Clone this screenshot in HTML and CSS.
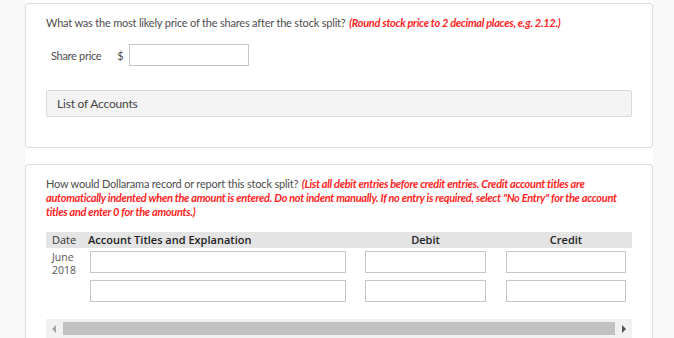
FILE: index.html
```html
<!DOCTYPE html>
<html lang="en">

<head>
    <meta charset="UTF-8">
    <meta name="viewport" content="width=device-width, initial-scale=1.0">
    <title>Stock Split</title>
    <link rel="stylesheet" href="styles.css">
</head>

<body>
    <div class="page">
        <div class="card card-first">
            <p class="question">What was the most likely price of the shares after the stock split? <em class="hint">(Round stock price to 2 decimal places, e.g. 2.12.)</em></p>

            <div class="share-row">
                <span class="share-label">Share price</span>
                <span class="dollar">$</span>
                <input type="text" class="share-input">
            </div>

            <div class="accounts-box">List of Accounts</div>
        </div>

        <div class="card card-second">
            <p class="question">How would Dollarama record or report this stock split? <em class="hint">(List all debit entries before credit entries. Credit account titles are automatically indented when the amount is entered. Do not indent manually. If no entry is required, select "No Entry" for the account titles and enter 0 for the amounts.)</em></p>

            <div class="journal">
                <div class="journal-head">
                    <div class="col-date">Date</div>
                    <div class="col-account">Account Titles and Explanation</div>
                    <div class="col-debit"><span>Debit</span></div>
                    <div class="col-credit"><span>Credit</span></div>
                </div>
                <div class="journal-row">
                    <div class="col-date">June<br>2018</div>
                    <div class="col-account"><input type="text" class="in-account"></div>
                    <div class="col-debit"><input type="text" class="in-amount"></div>
                    <div class="col-credit"><input type="text" class="in-amount"></div>
                </div>
                <div class="journal-row">
                    <div class="col-date"></div>
                    <div class="col-account"><input type="text" class="in-account"></div>
                    <div class="col-debit"><input type="text" class="in-amount"></div>
                    <div class="col-credit"><input type="text" class="in-amount"></div>
                </div>
            </div>

            <!-- fake horizontal scrollbar -->
            <div class="hscroll">
                <span class="arrow arrow-left"></span>
                <span class="thumb"></span>
                <span class="arrow arrow-right"></span>
            </div>
        </div>
    </div>
</body>

</html>
```

FILE: styles.css
```css
html, body {
    margin: 0;
    height: 100%;
}

body {
    background-color: #f8f8f8;
    font-family: Lato, "Open Sans", sans-serif;
    color: #4d4d4d;
    overflow: hidden;
}

.page {
    margin-left: 25px;
    width: 628px;
    min-height: 100%;
    background-color: #fff;
    padding-top: 3px;
    box-sizing: border-box;
}

.card {
    border: 1px solid #dcdcdc;
    border-radius: 3px;
    padding: 0 20px;
}

.card-first {
    height: 145px;
    box-sizing: border-box;
    padding-top: 12px;
}

.card-second {
    margin-top: 16px;
    padding-top: 12px;
    border-bottom: none;
    border-radius: 3px 3px 0 0;
}

.question {
    margin: 0;
    font-size: 11px;
    line-height: 14px;
    letter-spacing: -0.2px;
}

.hint {
    color: #ff1f1f;
    font-weight: bold;
    font-style: italic;
    letter-spacing: -0.3px;
    margin-left: 1px;
}

.share-row {
    display: flex;
    align-items: center;
    margin-top: 14px;
    padding-left: 5px;
    font-size: 11px;
    letter-spacing: -0.3px;
}

.dollar {
    margin-left: 16px;
    margin-right: 6px;
}

.share-input {
    width: 120px;
    height: 22px;
    box-sizing: border-box;
    border: 1px solid #c6c6c6;
    margin: 0;
}

.accounts-box {
    margin-top: 24px;
    height: 27px;
    box-sizing: border-box;
    border: 1px solid #dadada;
    border-radius: 2px;
    background-color: #f3f3f3;
    padding-left: 10px;
    font-size: 12px;
    line-height: 25px;
    color: #444;
    letter-spacing: -0.2px;
}

.journal {
    margin-top: 13px;
    font-family: "Open Sans", sans-serif;
    font-size: 11px;
}

.journal-head,
.journal-row {
    display: grid;
    grid-template-columns: 42px 277px 141px 126px;
}

.journal-head {
    background-color: #e4e4e4;
    height: 16px;
    line-height: 16px;
    font-weight: 600;
    color: #222;
}

.journal-head .col-date {
    padding-left: 6px;
    font-weight: 400;
    color: #333;
}

.journal-head .col-debit span {
    display: block;
    width: 121px;
    text-align: center;
}

.journal-head .col-credit span {
    display: block;
    width: 120px;
    text-align: center;
}

.journal-row {
    height: 22px;
    padding: 3px 0 4px;
}

.journal-row .col-date {
    padding-left: 6px;
    font-size: 10.5px;
    line-height: 13px;
    color: #555;
}

.journal-row .col-account {
    padding-left: 2px;
}

.journal-row input {
    height: 22px;
    box-sizing: border-box;
    border: 1px solid #c6c6c6;
    margin: 0;
    display: block;
}

.in-account {
    width: 256px;
}

.journal-row .col-debit .in-amount {
    width: 121px;
}

.journal-row .col-credit .in-amount {
    width: 120px;
}

.hscroll {
    margin-top: 13px;
    height: 19px;
    background-color: #f1f1f1;
    display: flex;
    align-items: center;
}

.thumb {
    flex: 1;
    height: 13px;
    background-color: #c1c1c1;
}

.arrow {
    width: 17px;
    height: 13px;
    position: relative;
}

.arrow::after {
    content: "";
    position: absolute;
    top: 3px;
    border-top: 4px solid transparent;
    border-bottom: 4px solid transparent;
}

.arrow-left::after {
    left: 6px;
    border-right: 4px solid #a3a3a3;
}

.arrow-right::after {
    left: 7px;
    border-left: 4px solid #505050;
}
```
